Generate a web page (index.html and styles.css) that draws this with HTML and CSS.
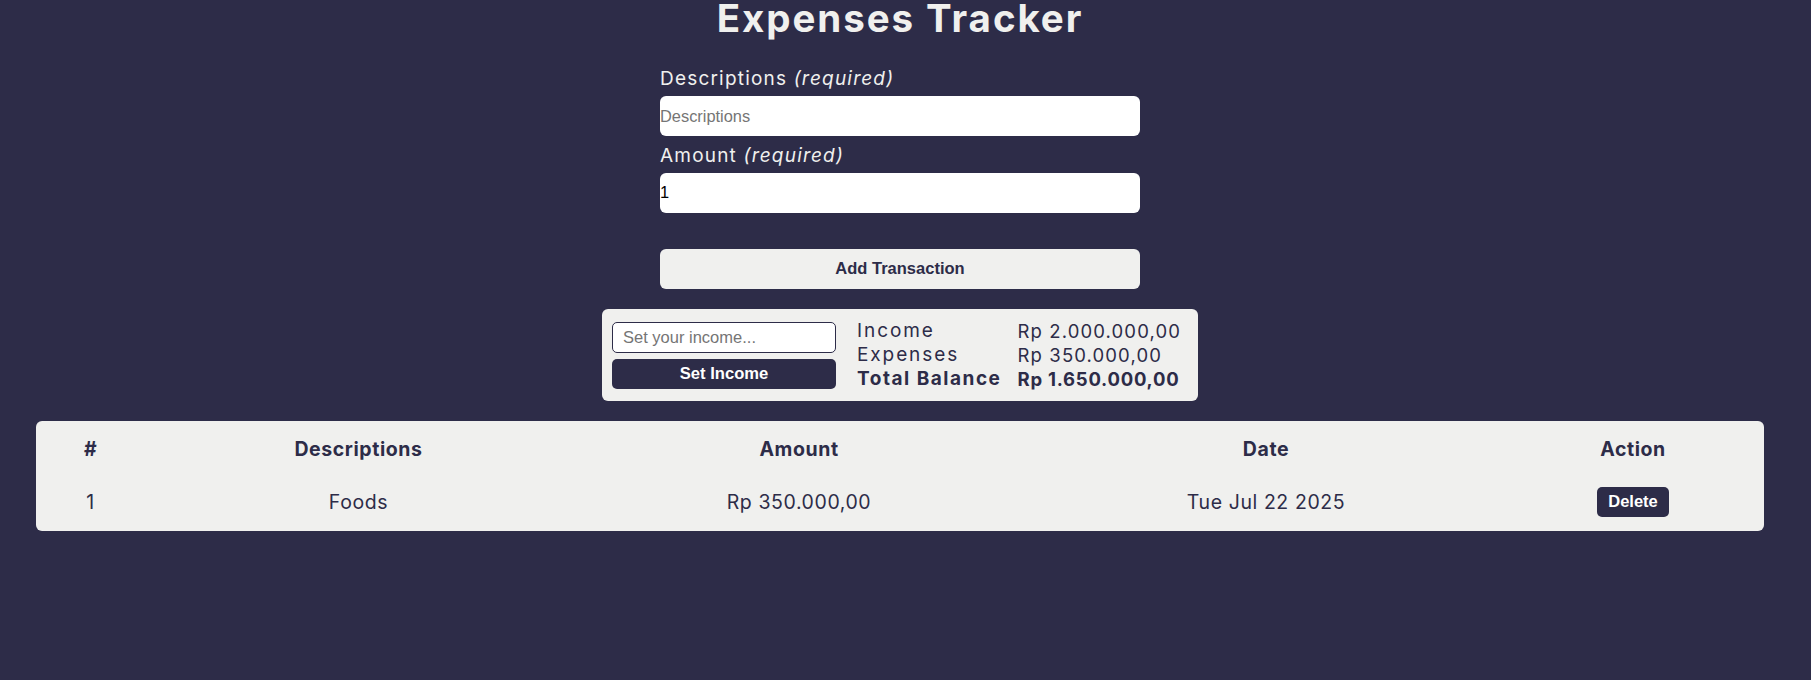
FILE: index.html
```html
<!DOCTYPE html>
<html lang="en">
<head>
<meta charset="utf-8">
<title>Expenses Tracker</title>
<link rel="stylesheet" href="styles.css">
</head>
<body>
<div class="page">
  <h1 class="title">Expenses Tracker</h1>
  <form class="entry-form">
    <label class="field-label" for="desc">Descriptions <em>(required)</em></label>
    <input class="field-input" id="desc" type="text" placeholder="Descriptions">
    <label class="field-label second" for="amount">Amount <em>(required)</em></label>
    <input class="field-input" id="amount" type="text" value="1">
    <button class="add-btn" type="button">Add Transaction</button>
  </form>
  <section class="summary">
    <div class="income-form">
      <input class="income-input" type="text" placeholder="Set your income...">
      <button class="income-btn" type="button">Set Income</button>
    </div>
    <div class="stats">
      <span class="stat-label">Income</span><span class="stat-value">Rp 2.000.000,00</span>
      <span class="stat-label">Expenses</span><span class="stat-value">Rp 350.000,00</span>
      <span class="stat-label strong">Total Balance</span><span class="stat-value strong">Rp 1.650.000,00</span>
    </div>
  </section>
  <div class="table-card">
    <table class="tx-table">
      <colgroup>
        <col class="c1"><col class="c2"><col class="c3"><col class="c4"><col class="c5">
      </colgroup>
      <thead>
        <tr><th>#</th><th>Descriptions</th><th>Amount</th><th>Date</th><th>Action</th></tr>
      </thead>
      <tbody>
        <tr><td>1</td><td>Foods</td><td>Rp 350.000,00</td><td>Tue Jul 22 2025</td><td><button class="delete-btn" type="button">Delete</button></td></tr>
      </tbody>
    </table>
  </div>
</div>
</body>
</html>
```

FILE: styles.css
```css
* { box-sizing: border-box; }
html, body { margin: 0; background: #2d2c48; }
body { font-family: Inter, "Liberation Sans", sans-serif; color: #2d2c48; }
.page { width: 1800px; display: flex; flex-direction: column; align-items: center; }
.title { margin: 0; font-size: 38.5px; line-height: 37px; font-weight: 700; color: #f0f0ee; letter-spacing: 0.05em; }
.entry-form { width: 480px; display: flex; flex-direction: column; margin-top: 31px; }
.field-label { color: #f0f0ee; font-size: 19px; line-height: 22px; letter-spacing: 0.063em; margin-bottom: 6px; }
.field-label em { font-style: italic; }
.field-label.second { margin-top: 8.5px; }
.field-input { height: 40px; border: 0; border-radius: 6px; padding: 0; font: 16.4px "Liberation Sans", Arial, sans-serif; background: #fff; color: #000; outline: none; }
.field-input::placeholder { color: #757575; }
.add-btn { margin-top: 36px; height: 40px; padding: 0; border: 0; border-radius: 6px; background: #f0f0ee; color: #2d2c48; font: 700 16.5px "Liberation Sans", Arial, sans-serif; }
.summary { margin-top: 20px; width: 596px; height: 92px; background: #f0f0ee; border-radius: 6px; padding: 13px 10px 12px; display: flex; align-items: center; gap: 21px; }
.income-form { width: 224px; display: flex; flex-direction: column; gap: 6px; }
.income-input { height: 31px; border: 1px solid #2d2c48; border-radius: 5px; padding: 0 10px; font: 16.5px "Liberation Sans", Arial, sans-serif; background: #fff; color: #000; outline: none; }
.income-input::placeholder { color: #757575; }
.income-btn { height: 30px; padding: 0; border: 0; border-radius: 5px; background: #2d2c48; color: #fff; font: 700 16.6px "Liberation Sans", Arial, sans-serif; }
.stats { display: grid; grid-template-columns: 160.6px auto; font-size: 18.5px; line-height: 24px; color: #2d2c48; }
.stat-label { font-size: 19px; letter-spacing: 0.1em; }
.stat-value { letter-spacing: 0.06em; }
.stat-label.strong { font-weight: 700; letter-spacing: 0.08em; }
.stat-value.strong { font-weight: 700; letter-spacing: 0.04em; }
.table-card { margin-top: 20px; width: 1728px; background: #f0f0ee; border-radius: 6px; padding: 16px 14px 14px 10px; }
.tx-table { width: 100%; border-collapse: collapse; table-layout: fixed; font-size: 19.5px; letter-spacing: 0.03em; color: #2d2c48; }
.c1 { width: 89px; }
.c2 { width: 447px; }
.c3 { width: 434px; }
.c4 { width: 500px; }
.c5 { width: 234px; }
.tx-table th { line-height: 24px; padding: 0 0 26px; font-weight: 700; text-align: center; }
.tx-table td { line-height: 24px; padding: 0; text-align: center; vertical-align: middle; }
.delete-btn { height: 30px; padding: 0 11px; border: 0; border-radius: 5px; background: #2d2c48; color: #fff; font: 700 16.5px "Liberation Sans", Arial, sans-serif; letter-spacing: 0; vertical-align: middle; }
```
